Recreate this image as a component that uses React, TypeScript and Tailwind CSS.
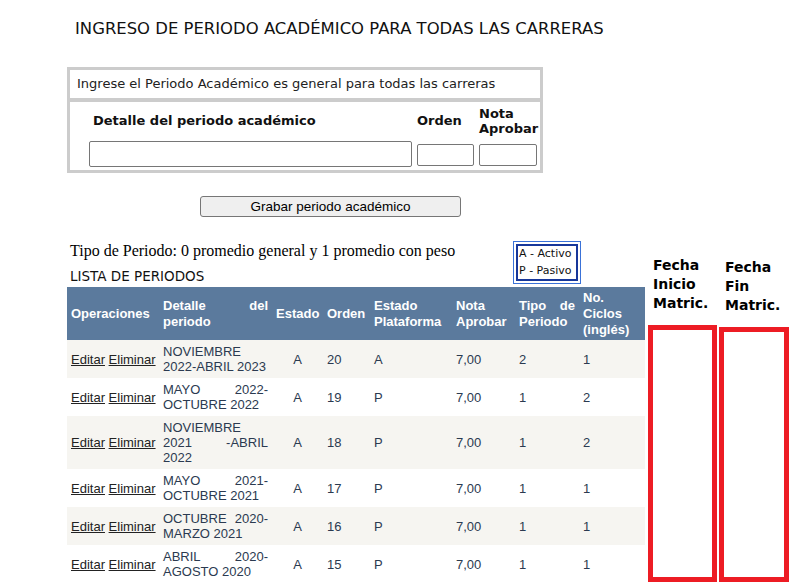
import React from "react";

const rows = [
  { det: "NOVIEMBRE 2022-ABRIL 2023", est: "A", ord: "20", plat: "A", nota: "7,00", tipo: "2", ciclos: "1" },
  { det: "MAYO 2022-OCTUBRE 2022", est: "A", ord: "19", plat: "P", nota: "7,00", tipo: "1", ciclos: "2" },
  { det: "NOVIEMBRE 2021 -ABRIL 2022", est: "A", ord: "18", plat: "P", nota: "7,00", tipo: "1", ciclos: "2" },
  { det: "MAYO 2021-OCTUBRE 2021", est: "A", ord: "17", plat: "P", nota: "7,00", tipo: "1", ciclos: "1" },
  { det: "OCTUBRE 2020-MARZO 2021", est: "A", ord: "16", plat: "P", nota: "7,00", tipo: "1", ciclos: "1" },
  { det: "ABRIL 2020-AGOSTO 2020", est: "A", ord: "15", plat: "P", nota: "7,00", tipo: "1", ciclos: "1" },
];

export default function App() {
  return (
    <div className="w-[795px] h-[583px] overflow-hidden bg-white text-[#111] font-['DejaVu_Sans',sans-serif]">
      <h1 className="pl-[75px] pt-[19px] text-[16.45px] leading-[20px] font-normal">
        INGRESO DE PERIODO ACADÉMICO PARA TODAS LAS CARRERAS
      </h1>

      <div className="ml-[67px] mt-[28px] w-[476px] border-[3px] border-[#cccccc]">
        <div className="h-[32px] flex items-center px-[7px] text-[13px] text-[#222] border-b-[4px] border-[#cccccc]">
          Ingrese el Periodo Académico es general para todas las carreras
        </div>
        <div className="pl-[19px] pt-[4px] pb-[3px] grid grid-cols-[323px_57px_58px] gap-x-[5px] items-start">
          <div className="h-[30px] flex items-center pl-[4px] font-bold text-[13px]">Detalle del periodo académico</div>
          <div className="h-[30px] flex items-center font-bold text-[13px]">Orden</div>
          <div className="h-[30px] font-bold text-[13px] leading-[15px]">
            Nota
            <br />
            Aprobar
          </div>
          <input className="mt-[5px] h-[26px] w-[323px] border border-[#767676] rounded-[2px] bg-white" />
          <input className="mt-[8px] h-[22px] w-[57px] border border-[#767676] rounded-[2px] bg-white" />
          <input className="mt-[8px] h-[22px] w-[58px] border border-[#767676] rounded-[2px] bg-white" />
        </div>
      </div>

      <button className="block ml-[200px] mt-[23px] w-[261px] h-[21px] bg-[#efefef] border border-[#767676] rounded-[3px] text-[13.5px] text-black font-['Liberation_Sans',Arial,sans-serif]">
        Grabar periodo académico
      </button>

      <div className="flex mt-[24px]">
        <div className="ml-[67px] w-[578px] flex flex-col">
          <div className="flex h-[46px]">
            <div className="pl-[3px] w-[446px]">
              <div className="font-['Liberation_Serif',serif] text-[16px] leading-[20px] text-black">
                Tipo de Periodo: 0 promedio general y 1 promedio con peso
              </div>
              <div className="text-[13.5px] leading-[18px] mt-[6px] text-[#111]">LISTA DE PERIODOS</div>
            </div>
            <div className="h-[43px] w-[68px] border border-[#3a72d8] p-[2px]">
              <div className="h-full border-[2px] border-[#17379a] pl-[1px] text-[11px] leading-[16.5px] text-[#111]">
                <div>A - Activo</div>
                <div>P - Pasivo</div>
              </div>
            </div>
          </div>
          <table className="w-[578px] table-fixed border-collapse font-['Liberation_Sans',Arial,sans-serif] text-[13px]">
            <colgroup>
              <col className="w-[92px]" />
              <col className="w-[113px]" />
              <col className="w-[51px]" />
              <col className="w-[47px]" />
              <col className="w-[82px]" />
              <col className="w-[63px]" />
              <col className="w-[64px]" />
              <col className="w-[66px]" />
            </colgroup>
            <thead>
              <tr className="bg-[#5b7a9d] text-white">
                <th className="px-[4px] pt-[3px] pb-[2px] leading-[16px] text-left align-middle font-bold">Operaciones</th>
                <th className="px-[4px] pt-[3px] pb-[2px] leading-[16px] text-justify align-middle font-bold">Detalle del periodo</th>
                <th className="px-[4px] pt-[3px] pb-[2px] leading-[16px] text-center align-middle font-bold">Estado</th>
                <th className="px-[4px] pt-[3px] pb-[2px] leading-[16px] text-left align-middle font-bold">Orden</th>
                <th className="px-[4px] pt-[3px] pb-[2px] leading-[16px] text-left align-middle font-bold">Estado Plataforma</th>
                <th className="px-[4px] pt-[3px] pb-[2px] leading-[16px] text-left align-middle font-bold">Nota Aprobar</th>
                <th className="px-[4px] pt-[3px] pb-[2px] leading-[16px] text-justify align-middle font-bold">Tipo de Periodo</th>
                <th className="px-[4px] pt-[3px] pb-[2px] leading-[16px] text-left align-middle font-bold">No. Ciclos (inglés)</th>
              </tr>
            </thead>
            <tbody className="text-[#2b3a50]">
              {rows.map((r, i) => (
                <tr key={i} className={i % 2 === 0 ? "bg-[#f6f5f1]" : "bg-white"}>
                  <td className="px-[4px] py-[4px] leading-[15px] align-middle whitespace-nowrap">
                    <a href="#" className="underline text-[#222]">Editar</a>{" "}
                    <a href="#" className="underline text-[#222]">Eliminar</a>
                  </td>
                  <td className="px-[4px] py-[4px] leading-[15px] align-middle text-justify">{r.det}</td>
                  <td className="px-[4px] py-[4px] leading-[15px] align-middle text-center">{r.est}</td>
                  <td className="px-[4px] py-[4px] leading-[15px] align-middle">{r.ord}</td>
                  <td className="px-[4px] py-[4px] leading-[15px] align-middle">{r.plat}</td>
                  <td className="px-[4px] py-[4px] leading-[15px] align-middle">{r.nota}</td>
                  <td className="px-[4px] py-[4px] leading-[15px] align-middle">{r.tipo}</td>
                  <td className="px-[4px] py-[4px] leading-[15px] align-middle">{r.ciclos}</td>
                </tr>
              ))}
            </tbody>
          </table>
        </div>

        <div className="ml-[3px] w-[69px] flex flex-col">
          <div className="pt-[15px] pl-[5px] font-bold text-[14px] leading-[19px] text-black">
            Fecha
            <br />
            Inicio
            <br />
            Matric.
          </div>
          <div className="mt-[12px] mb-[1px] flex-1 border-[5px] border-[#ed1c24]" />
        </div>
        <div className="ml-[2px] w-[70px] flex flex-col">
          <div className="pt-[17px] pl-[6px] font-bold text-[14px] leading-[19px] text-black">
            Fecha
            <br />
            Fin
            <br />
            Matric.
          </div>
          <div className="mt-[12px] mb-[1px] flex-1 border-[5px] border-[#ed1c24]" />
        </div>
      </div>
    </div>
  );
}
